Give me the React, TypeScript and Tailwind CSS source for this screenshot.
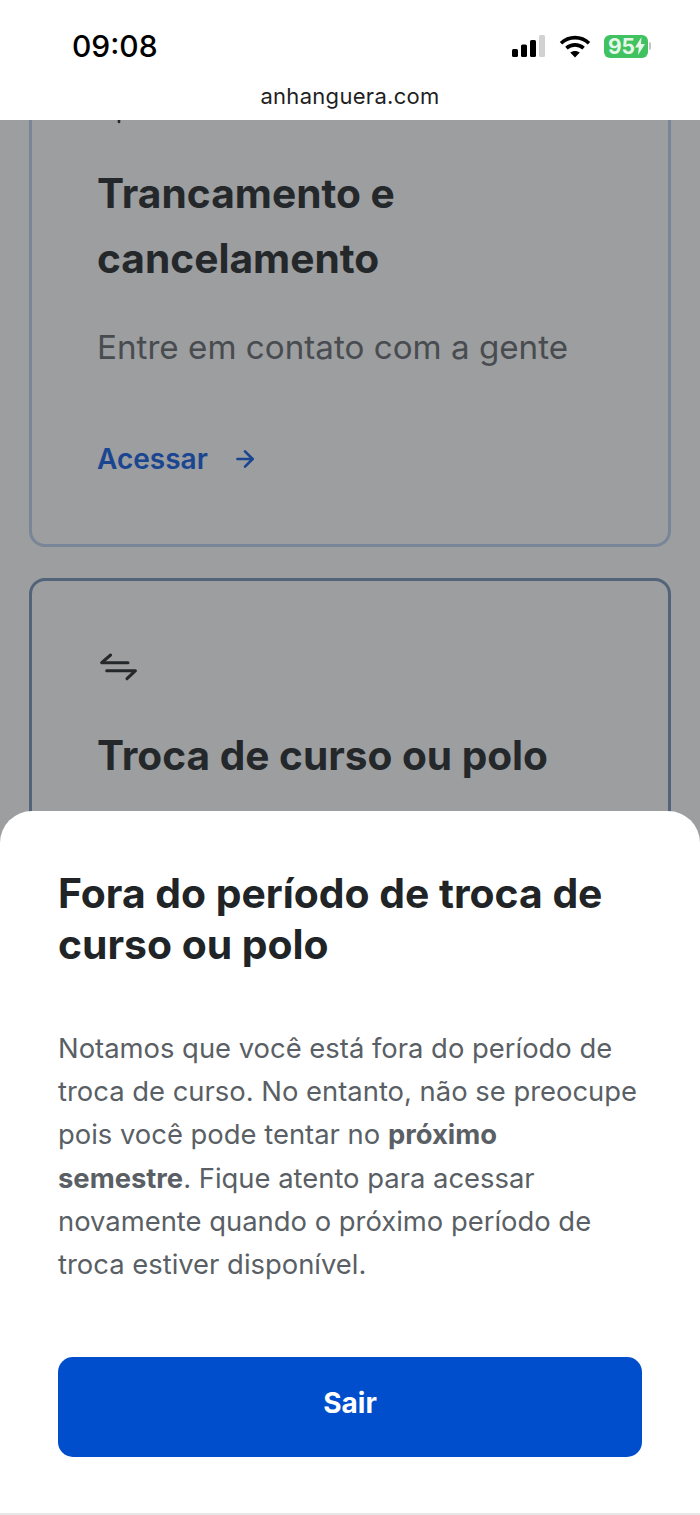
import { ArrowRight } from "lucide-react";

const fontStack = "font-['Inter','Liberation_Sans',sans-serif]";

function SignalIcon() {
  return (
    <svg aria-hidden="true" className="h-[24px] w-[36px]" viewBox="0 0 36 24">
      <rect x="2" y="15" width="6" height="8" rx="1.5" fill="#000" />
      <rect x="11" y="10.5" width="6" height="12.5" rx="1.5" fill="#000" />
      <rect x="20" y="6" width="6" height="17" rx="1.5" fill="#000" />
      <rect x="29" y="1" width="6" height="22" rx="1.5" fill="#d2d2d2" />
    </svg>
  );
}

function WifiIcon() {
  return (
    <svg aria-hidden="true" className="h-[24px] w-[32px]" viewBox="0 0 32 24" fill="none" stroke="#000" strokeWidth="3.6">
      <path d="M2 9.2C10 1.8 22 1.8 30 9.2" />
      <path d="M7.4 14.2C12.4 9.8 19.6 9.8 24.6 14.2" />
      <path d="M16 23.5 11.2 18.6C14 16.4 18 16.4 20.8 18.6Z" fill="#000" stroke="none" />
    </svg>
  );
}

function BatteryIcon() {
  return (
    <div className="flex items-center gap-[1px]">
      <div className="flex h-[23px] w-[44px] items-center justify-center rounded-[6px] bg-[#3fc25f] pl-[1px] text-[21px] leading-none font-bold text-[#e6f7ea]">
        <span>95</span>
        <svg aria-hidden="true" className="h-[18px] w-[10px]" viewBox="0 0 10 18">
          <path d="M6.5 0 0 10.5h3.8L3 18l7-11H6z" fill="#e6f7ea" />
        </svg>
      </div>
      <div className="h-[8px] w-[2px] rounded-r-full bg-[#c4c4c4]" />
    </div>
  );
}

function SwapIcon() {
  return (
    <svg aria-hidden="true" className="h-[36px] w-[42px]" viewBox="0 0 42 36" fill="none" stroke="#24282b" strokeWidth="3" strokeLinecap="round" strokeLinejoin="round">
      <path d="M13.6 5 4.7 12.7H31" />
      <path d="M9.7 20.7H38.5L30 28.7" />
    </svg>
  );
}

function HiddenIcon() {
  return (
    <svg aria-hidden="true" className="h-[36px] w-[42px]" viewBox="0 0 42 36" fill="none" stroke="#24282b" strokeWidth="2.6" strokeLinecap="round">
      <path d="M22 4v28" />
    </svg>
  );
}

export default function App() {
  return (
    <div className={`relative flex h-[1515px] w-[700px] flex-col overflow-hidden bg-white ${fontStack}`}>
      <header className="relative z-10 flex h-[120px] shrink-0 flex-col bg-white">
        <div className="flex items-center justify-between pt-[28px] pr-[49px] pl-[72px]">
          <span className="text-[30px] leading-[36px] font-medium text-black">09:08</span>
          <div className="flex items-center gap-[13px]">
            <SignalIcon />
            <WifiIcon />
            <BatteryIcon />
          </div>
        </div>
        <div className="mt-[16px] text-center text-[22px] leading-[32px] tracking-[0.3px] text-[#1f1f1f]">anhanguera.com</div>
      </header>

      <main className="flex min-h-0 flex-1 flex-col gap-[31px] overflow-hidden bg-[#9c9e9f] px-[29px]">
        <section className="-mt-[105px] flex h-[532px] shrink-0 flex-col rounded-[16px] border-[3px] border-[#788698] pl-[65px]">
          <div className="mt-[72px] h-[36px]">
            <HiddenIcon />
          </div>
          <h2 className="mt-[35px] text-[40.7px] leading-[65px] font-bold text-[#24282b]">
            Trancamento e
            <br />
            cancelamento
          </h2>
          <p className="mt-[34px] text-[33.2px] leading-[44px] text-[#484c50]">Entre em contato com a gente</p>
          <div className="mt-[72px] flex items-center gap-[24px] text-[#1a4590]">
            <span className="text-[28px] leading-[36px] font-semibold">Acessar</span>
            <ArrowRight className="size-[26px]" strokeWidth={2.4} />
          </div>
        </section>

        <section className="flex h-[500px] shrink-0 flex-col rounded-[16px] border-[3px] border-[#52637a] pl-[65px]">
          <div className="mt-[69px] h-[36px]">
            <SwapIcon />
          </div>
          <h2 className="mt-[37px] text-[40.6px] leading-[65px] font-bold text-[#24282b]">Troca de curso ou polo</h2>
        </section>
      </main>

      <div className="absolute inset-x-0 bottom-0 z-20 h-[704px] rounded-t-[32px] border-b-2 border-[#e6e6e6] bg-white px-[58px] pt-[57px]">
        <h1 className="text-[40.85px] leading-[51px] font-bold text-[#212427]">Fora do período de troca de curso ou polo</h1>
        <p className="mt-[57px] text-[27.4px] leading-[43.2px] text-[#5a5f65]">
          Notamos que você está fora do período de troca de curso. No entanto, não se preocupe pois você pode tentar no{" "}
          <strong className="font-bold">
            próximo
            <br />
            semestre
          </strong>
          . Fique atento para acessar novamente quando o próximo período de troca estiver disponível.
        </p>
        <button className="mt-[71px] flex h-[100px] w-full items-center justify-center rounded-[15px] bg-[#004ecb] pb-[8px] text-[28px] font-bold text-white" type="button">
          Sair
        </button>
      </div>
    </div>
  );
}
